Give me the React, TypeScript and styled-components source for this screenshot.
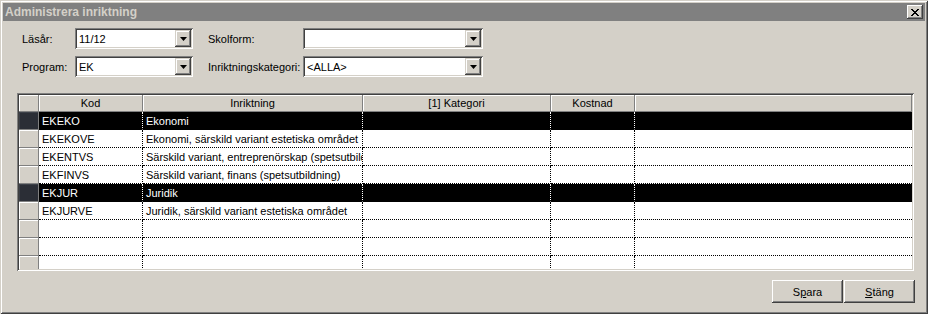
import styled, { createGlobalStyle } from "styled-components";

const GlobalStyle = createGlobalStyle`
  html, body {
    margin: 0;
    padding: 0;
    background: #ffffff;
  }
  body {
    font-family: "Liberation Sans", Arial, sans-serif;
    font-size: 11px;
    color: #000;
  }
`;

const Screen = styled.div`
  width: 931px;
  height: 318px;
  overflow: hidden;
  display: flex;
  flex-direction: column;
  background: #ffffff;
`;

const Window = styled.div`
  width: 928px;
  height: 314px;
  box-sizing: border-box;
  padding: 3px;
  background: #d4d0c8;
  display: flex;
  flex-direction: column;
  box-shadow: inset 1px 1px #d4d0c8, inset -1px -1px #404040,
    inset 2px 2px #ffffff, inset -2px -2px #808080;
`;

const TitleBar = styled.div`
  height: 18px;
  background: #808080;
  display: flex;
  align-items: center;
  justify-content: space-between;
  padding: 0 2px 0 2px;
`;

const Title = styled.span`
  font-weight: bold;
  font-size: 12px;
  color: #d4d0c8;
`;

const CloseButton = styled.div`
  width: 16px;
  height: 14px;
  box-sizing: border-box;
  background: #d4d0c8;
  display: flex;
  align-items: center;
  justify-content: center;
  box-shadow: inset -1px -1px #404040, inset 1px 1px #ffffff,
    inset -2px -2px #808080;
`;

const Form = styled.div`
  margin: 7px 0 0 19px;
  display: grid;
  grid-template-columns: 53px 118px 15px 95px 180px;
  grid-auto-rows: 21px;
  row-gap: 7px;
  align-items: center;
`;

const Label = styled.div`
  white-space: nowrap;
`;

const Combo = styled.div`
  height: 21px;
  box-sizing: border-box;
  background: #ffffff;
  display: flex;
  align-items: center;
  padding: 2px;
  box-shadow: inset 1px 1px #808080, inset -1px -1px #ffffff,
    inset 2px 2px #404040, inset -2px -2px #d4d0c8;
`;

const ComboText = styled.div`
  flex: 1;
  padding-left: 2px;
  white-space: nowrap;
  overflow: hidden;
`;

const DropButton = styled.div`
  width: 16px;
  height: 17px;
  box-sizing: border-box;
  background: #d4d0c8;
  display: flex;
  align-items: center;
  justify-content: center;
  box-shadow: inset -1px -1px #404040, inset 1px 1px #d4d0c8,
    inset -2px -2px #808080, inset 2px 2px #ffffff;
`;

const GridFrame = styled.div`
  margin: 16px 11px 0 14px;
  height: 178px;
  box-sizing: border-box;
  padding: 2px;
  background: #ffffff;
  overflow: hidden;
  box-shadow: inset 1px 1px #808080, inset -1px -1px #ffffff,
    inset 2px 2px #404040, inset -2px -2px #d4d0c8;
`;

const GridBody = styled.div`
  height: 100%;
  overflow: hidden;
`;

const COLS = "20px 104px 220px 188px 84px 1fr";

const HeaderRow = styled.div`
  display: grid;
  grid-template-columns: ${COLS};
  height: 17px;
`;

const HeaderCell = styled.div`
  background: #d4d0c8;
  box-sizing: border-box;
  display: flex;
  align-items: center;
  justify-content: center;
  white-space: nowrap;
  border-right: 1px solid #808080;
  border-bottom: 1px solid #808080;
  box-shadow: inset 1px 1px #ffffff;
`;

const Row = styled.div<{ $selected?: boolean }>`
  display: grid;
  grid-template-columns: ${COLS};
  height: 18px;
  flex-shrink: 0;
  background: ${(p) => (p.$selected ? "#000000" : "#ffffff")};
  color: ${(p) => (p.$selected ? "#ffffff" : "#000000")};
`;

const RowHeader = styled.div<{ $selected?: boolean }>`
  box-sizing: border-box;
  background: ${(p) => (p.$selected ? "#2b2e36" : "#d4d0c8")};
  border-right: 1px solid #808080;
  border-bottom: 1px solid #808080;
  box-shadow: inset 1px 1px ${(p) => (p.$selected ? "#3c4048" : "#ffffff")};
`;

const Cell = styled.div<{ $selected?: boolean; $last?: boolean }>`
  box-sizing: border-box;
  display: flex;
  align-items: center;
  padding-left: 3px;
  white-space: nowrap;
  overflow: hidden;
  border-right: ${(p) =>
    p.$last ? "none" : `1px dotted ${p.$selected ? "#ffffff" : "#000000"}`};
  border-bottom: 1px dotted #000000;
`;

const ButtonRow = styled.div`
  display: flex;
  justify-content: flex-end;
  margin: 9px 10px 0 0;
`;

const Button = styled.div`
  width: 71px;
  height: 23px;
  box-sizing: border-box;
  background: #d4d0c8;
  display: flex;
  align-items: center;
  justify-content: center;
  box-shadow: inset -1px -1px #404040, inset 1px 1px #ffffff,
    inset -2px -2px #808080;
  & + & {
    margin-left: 1px;
  }
`;

const Underline = styled.span`
  text-decoration: underline;
`;

const Arrow = () => (
  <svg width="7" height="4" viewBox="0 0 7 4">
    <path d="M0 0h7L3.5 4z" fill="#000" />
  </svg>
);

const CloseIcon = () => (
  <svg width="8" height="7" viewBox="0 0 8 7" shapeRendering="crispEdges">
    <path
      d="M0 0h2v1h1v1h2V1h1V0h2v1H7v1H6v1H5v1h1v1h1v1h1v1H6V6H5V5H3v1H2v1H0V6h1V5h1V4h1V3H2V2H1V1H0z"
      fill="#000"
    />
  </svg>
);

type Item = { kod: string; name: string; selected?: boolean };

const items: Item[] = [
  { kod: "EKEKO", name: "Ekonomi", selected: true },
  { kod: "EKEKOVE", name: "Ekonomi, särskild variant estetiska området" },
  { kod: "EKENTVS", name: "Särskild variant, entreprenörskap (spetsutbildning)" },
  { kod: "EKFINVS", name: "Särskild variant, finans (spetsutbildning)" },
  { kod: "EKJUR", name: "Juridik", selected: true },
  { kod: "EKJURVE", name: "Juridik, särskild variant estetiska området" },
  { kod: "", name: "" },
  { kod: "", name: "" },
  { kod: "", name: "" },
];

const ComboBox = ({ value }: { value: string }) => (
  <Combo>
    <ComboText>{value}</ComboText>
    <DropButton>
      <Arrow />
    </DropButton>
  </Combo>
);

export default function App() {
  return (
    <Screen>
      <GlobalStyle />
      <Window>
        <TitleBar>
          <Title>Administrera inriktning</Title>
          <CloseButton>
            <CloseIcon />
          </CloseButton>
        </TitleBar>

        <Form>
          <Label>Läsår:</Label>
          <ComboBox value="11/12" />
          <div />
          <Label>Skolform:</Label>
          <ComboBox value="" />

          <Label>Program:</Label>
          <ComboBox value="EK" />
          <div />
          <Label>Inriktningskategori:</Label>
          <ComboBox value="<ALLA>" />
        </Form>

        <GridFrame>
          <GridBody>
            <HeaderRow>
              <HeaderCell />
              <HeaderCell>Kod</HeaderCell>
              <HeaderCell>Inriktning</HeaderCell>
              <HeaderCell>[1] Kategori</HeaderCell>
              <HeaderCell>Kostnad</HeaderCell>
              <HeaderCell />
            </HeaderRow>
            {items.map((it, i) => (
              <Row key={i} $selected={it.selected}>
                <RowHeader $selected={it.selected} />
                <Cell $selected={it.selected}>{it.kod}</Cell>
                <Cell $selected={it.selected}>{it.name}</Cell>
                <Cell $selected={it.selected} />
                <Cell $selected={it.selected} />
                <Cell $selected={it.selected} $last />
              </Row>
            ))}
          </GridBody>
        </GridFrame>

        <ButtonRow>
          <Button>
            S<Underline>p</Underline>ara
          </Button>
          <Button>
            <Underline>S</Underline>täng
          </Button>
        </ButtonRow>
      </Window>
    </Screen>
  );
}
